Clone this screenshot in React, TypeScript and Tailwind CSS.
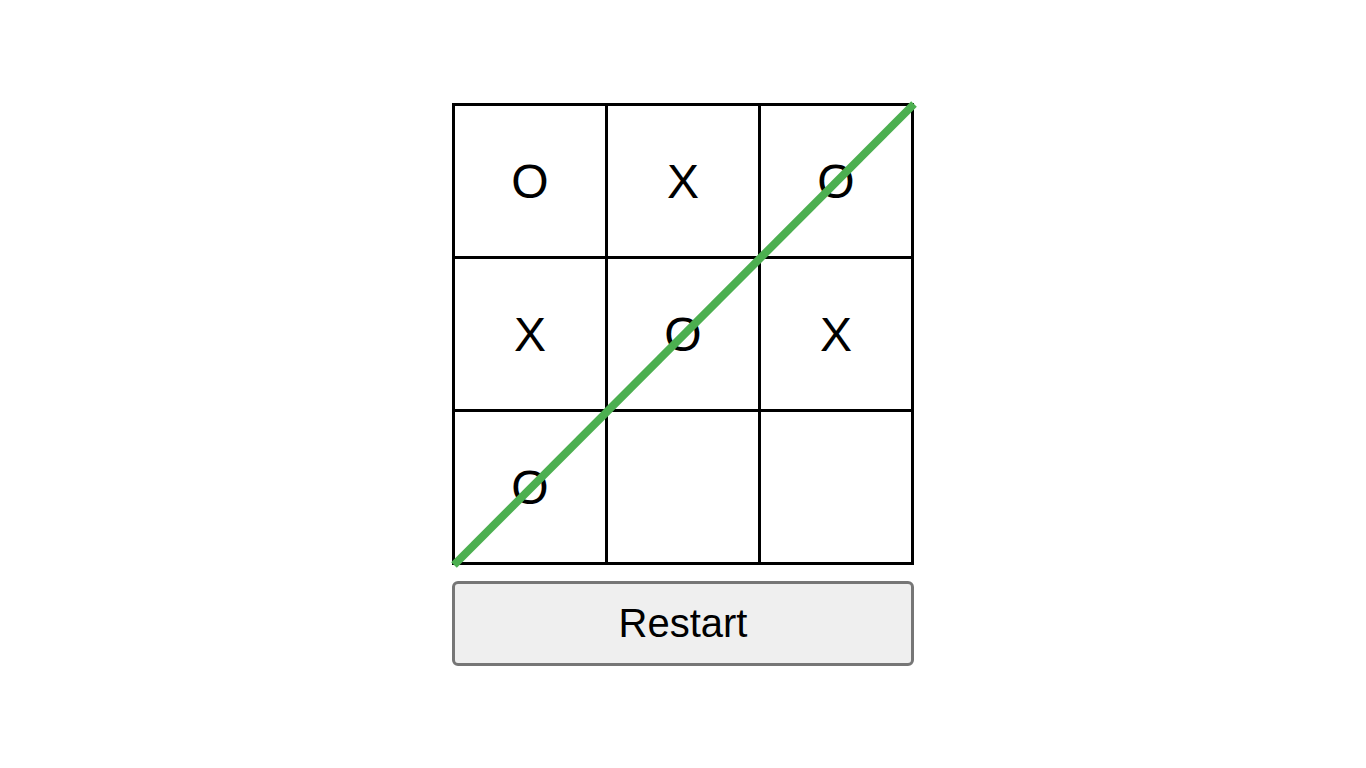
const board = ["O", "X", "O", "X", "O", "X", "O", "", ""];

export default function App() {
  return (
    <div className="min-h-screen bg-white flex items-center justify-center font-['Liberation_Sans',Arial,sans-serif]">
      <div className="flex flex-col gap-[16px] w-[462px]">
        <div className="relative">
          <div className="grid grid-cols-3 gap-[3px] p-[3px] bg-black">
            {board.map((v, i) => (
              <div
                key={i}
                className="w-[150px] h-[150px] bg-white flex items-center justify-center text-[48px] text-black pt-[2px]"
              >
                {v}
              </div>
            ))}
          </div>
          <svg
            className="absolute inset-0 pointer-events-none overflow-visible"
            width="462"
            height="462"
            viewBox="0 0 462 462"
          >
            <line x1="2" y1="462" x2="462" y2="1" stroke="#4caf50" strokeWidth="8" />
          </svg>
        </div>
        <button className="h-[85px] w-full bg-[#efefef] border-[3px] border-solid border-[#767676] rounded-[6px] text-[40px] text-black">
          Restart
        </button>
      </div>
    </div>
  );
}
